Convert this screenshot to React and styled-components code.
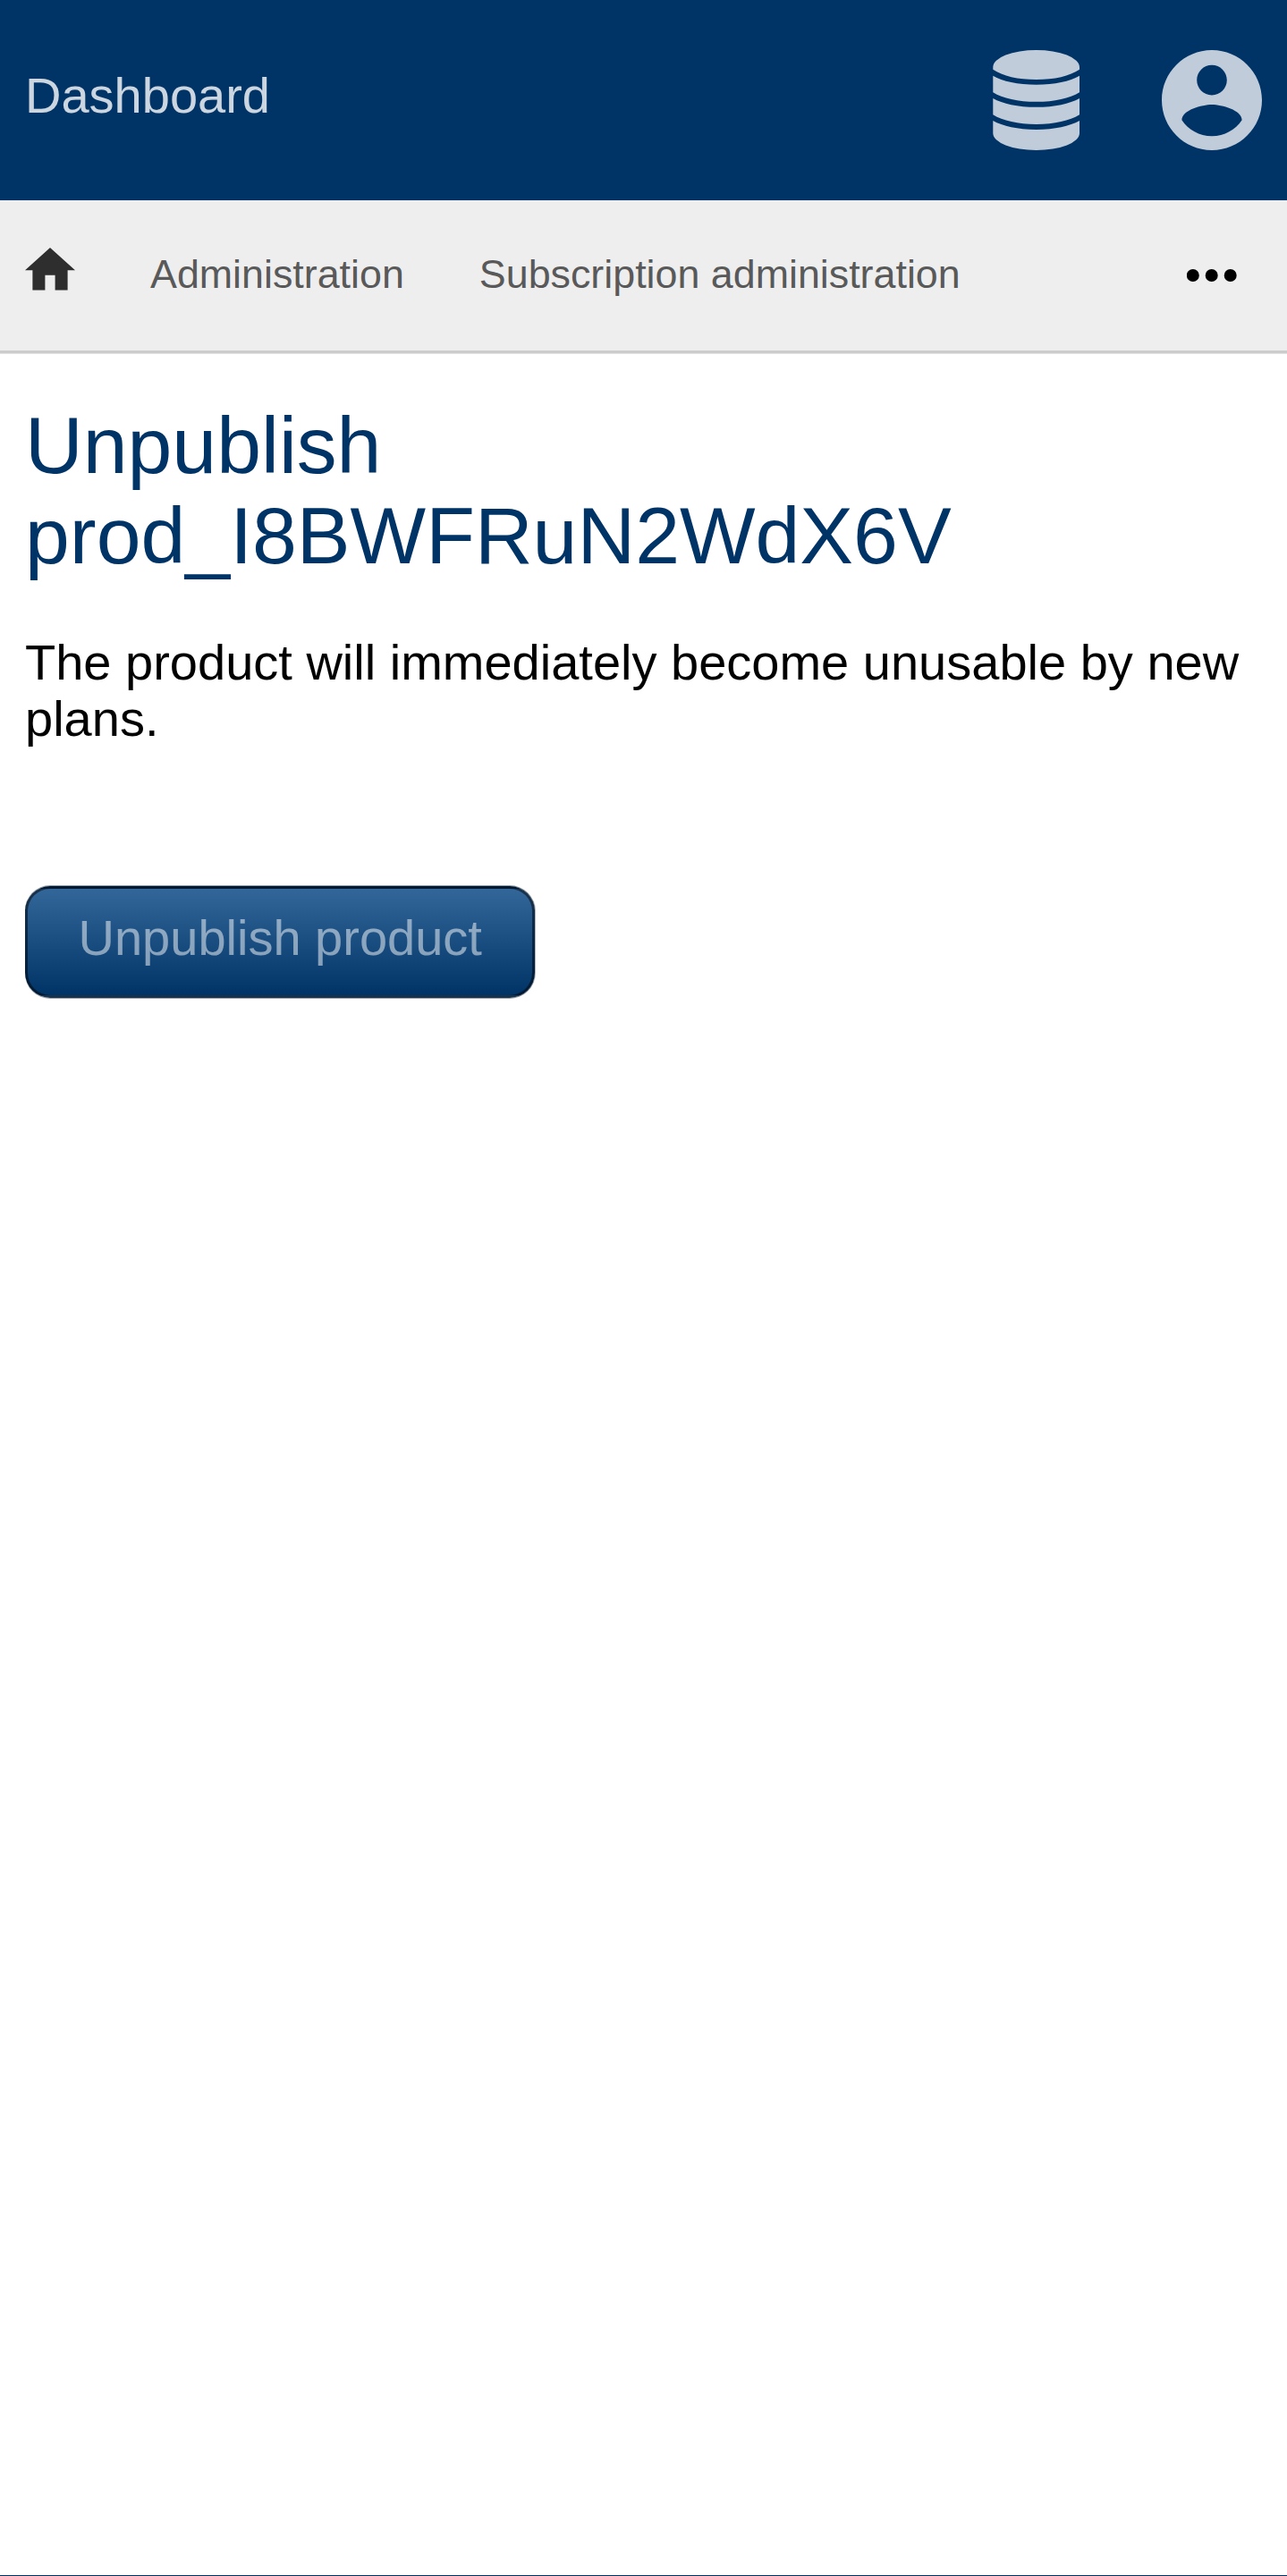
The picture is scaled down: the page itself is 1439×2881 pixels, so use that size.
import React from "react";
import styled, { createGlobalStyle } from "styled-components";

const GlobalStyle = createGlobalStyle`
  html, body { margin: 0; background: #fff; }
  body { font-family: "Liberation Sans", Arial, sans-serif; font-size: 56px; color: #000; }
  * { box-sizing: border-box; }
`;

const Page = styled.div`
  display: flex;
  flex-direction: column;
  height: 2881px;
  overflow: hidden;
`;

const Header = styled.header`
  display: flex;
  align-items: center;
  justify-content: space-between;
  flex: none;
  height: 224px;
  padding: 0 28px;
  background: #003366;
`;

const Brand = styled.a`
  margin-bottom: 11px;
  line-height: 63px;
  color: rgba(255, 255, 255, 0.8);
`;

const Actions = styled.div`
  display: flex;
  gap: 84px;
`;

const ActionIcon = styled.svg`
  display: block;
  width: 112px;
  height: 112px;
  fill: #c0ccd9;
`;

const Nav = styled.nav`
  display: flex;
  align-items: center;
  flex: none;
  height: 172px;
  padding: 0 56px 4px 28px;
  background: #eee;
  box-shadow: inset 0 -1px #e4e4e4, inset 0 -4px #ccc;
`;

const HomeIcon = styled.svg`
  width: 56px;
  height: 48px;
  margin: 0 84px 14px 0;
  fill: #2e2e2e;
`;

const NavLink = styled.a`
  margin: 0 84px 3px 0;
  font-size: 44.8px;
  line-height: 51px;
  color: #595959;
`;

const MoreIcon = styled.svg`
  width: 56px;
  height: 16px;
  margin-left: auto;
  fill: #000;
`;

const Main = styled.main`
  flex: 1;
  padding: 52px 28px 0;
`;

const Title = styled.h1`
  margin: 0 0 59px;
  font-size: 89.6px;
  font-weight: 400;
  line-height: 101px;
  color: #003366;
`;

const Message = styled.p`
  margin: 0 0 156px;
  line-height: 63px;
`;

const SubmitButton = styled.button`
  display: block;
  height: 125px;
  padding: 0 56.5px 10px;
  border: 3px solid rgba(0, 0, 0, 0.5);
  border-radius: 28px;
  background: linear-gradient(#336699, #003366);
  box-shadow: 0 -1px rgba(0, 20, 45, 0.4), 0 1px rgba(0, 20, 45, 0.4), 1px 0 rgba(0, 20, 45, 0.3);
  font: inherit;
  line-height: 63px;
  color: rgba(255, 255, 255, 0.5);
`;

const Footer = styled.footer`
  flex: none;
  height: 1px;
  background: #003366;
`;

export default function App() {
  return (
    <Page>
      <GlobalStyle />
      <Header>
        <Brand>Dashboard</Brand>
        <Actions>
          <ActionIcon viewBox="0 0 112 112">
            <path d="M7.300 19A48.350 19 0 0 1 104 19V21.700C93 29 76 33 55.700 33S18 29 7.300 21.700zM7.300 28.700C18 35 35 38.700 55.700 38.700S93 35 104 28.700V47.200C93 54 76 57.800 55.700 57.800S18 54 7.300 47.200zM7.300 53.900C18 60 35 63.700 55.700 63.700S93 60 104 53.900V72.300C93 79 76 83 55.700 83S18 79 7.300 72.300zM7.300 79C18 85 35 88.900 55.700 88.900S93 85 104 79V93A48.350 19 0 0 1 7.300 93z" />
          </ActionIcon>
          <ActionIcon viewBox="2 2 20 20">
            <path d="M12 2C6.480 2 2 6.480 2 12s4.480 10 10 10 10-4.480 10-10S17.520 2 12 2zm0 3c1.660 0 3 1.340 3 3s-1.340 3-3 3-3-1.340-3-3 1.340-3 3-3zm0 14.200c-2.500 0-4.710-1.280-6-3.220.030-1.990 4-3.080 6-3.080 1.990 0 5.970 1.090 6 3.080-1.290 1.940-3.500 3.220-6 3.220z" />
          </ActionIcon>
        </Actions>
      </Header>
      <Nav>
        <HomeIcon viewBox="2 3 20 17.14">
          <path d="M10 20v-6h4v6h5v-8h3L12 3 2 12h3v8z" />
        </HomeIcon>
        <NavLink>Administration</NavLink>
        <NavLink>Subscription administration</NavLink>
        <MoreIcon viewBox="0 0 56 16">
          <circle cx="6.800" cy="8" r="7" />
          <circle cx="27.700" cy="8" r="7" />
          <circle cx="48.700" cy="8" r="7" />
        </MoreIcon>
      </Nav>
      <Main>
        <Title>
          Unpublish
          <br />
          prod_I8BWFRuN2WdX6V
        </Title>
        <Message>The product will immediately become unusable by new plans.</Message>
        <SubmitButton type="button">Unpublish product</SubmitButton>
      </Main>
      <Footer />
    </Page>
  );
}
